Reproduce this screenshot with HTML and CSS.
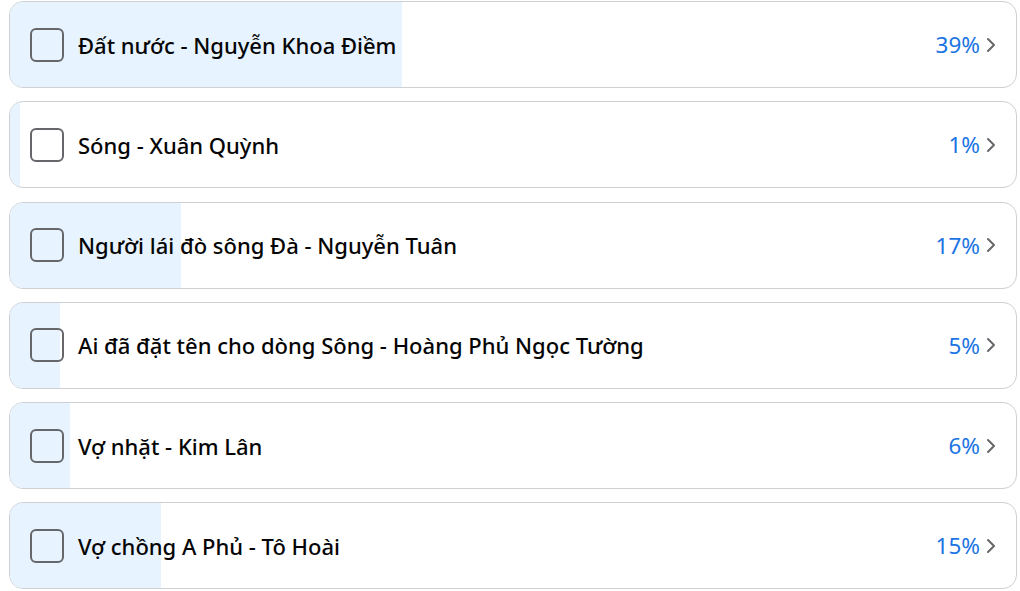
FILE: index.html
```html
<!DOCTYPE html>
<html lang="vi">
<head>
<meta charset="utf-8">
<link rel="stylesheet" href="styles.css">
</head>
<body>
<div class="poll">
  <div class="option">
    <div class="fill" style="width:39%"></div>
    <div class="box"></div>
    <div class="label">Đất nước - Nguyễn Khoa Điềm</div>
    <div class="pct">39%</div>
    <svg class="chev" viewBox="0 0 10 16"><path d="M2 2 L8 8 L2 14" /></svg>
  </div>
  <div class="option">
    <div class="fill" style="width:1%"></div>
    <div class="box"></div>
    <div class="label">Sóng - Xuân Quỳnh</div>
    <div class="pct">1%</div>
    <svg class="chev" viewBox="0 0 10 16"><path d="M2 2 L8 8 L2 14" /></svg>
  </div>
  <div class="option">
    <div class="fill" style="width:17%"></div>
    <div class="box"></div>
    <div class="label">Người lái đò sông Đà - Nguyễn Tuân</div>
    <div class="pct">17%</div>
    <svg class="chev" viewBox="0 0 10 16"><path d="M2 2 L8 8 L2 14" /></svg>
  </div>
  <div class="option">
    <div class="fill" style="width:5%"></div>
    <div class="box"></div>
    <div class="label">Ai đã đặt tên cho dòng Sông - Hoàng Phủ Ngọc Tường</div>
    <div class="pct">5%</div>
    <svg class="chev" viewBox="0 0 10 16"><path d="M2 2 L8 8 L2 14" /></svg>
  </div>
  <div class="option">
    <div class="fill" style="width:6%"></div>
    <div class="box"></div>
    <div class="label">Vợ nhặt - Kim Lân</div>
    <div class="pct">6%</div>
    <svg class="chev" viewBox="0 0 10 16"><path d="M2 2 L8 8 L2 14" /></svg>
  </div>
  <div class="option">
    <div class="fill" style="width:15%"></div>
    <div class="box"></div>
    <div class="label">Vợ chồng A Phủ - Tô Hoài</div>
    <div class="pct">15%</div>
    <svg class="chev" viewBox="0 0 10 16"><path d="M2 2 L8 8 L2 14" /></svg>
  </div>
</div>
</body>
</html>
```

FILE: styles.css
```css
html, body {
  margin: 0;
  padding: 0;
  background: #ffffff;
}
body {
  font-family: "Noto Sans", "Open Sans", sans-serif;
  color: #050505;
}
.poll {
  display: flex;
  flex-direction: column;
  gap: 13.3px;
  padding: 1px 3px 0 9px;
}
.option {
  position: relative;
  display: flex;
  align-items: center;
  height: 85px;
  border: 1px solid #ced0d4;
  border-radius: 14px;
  overflow: hidden;
  padding: 0 20px 0 20px;
  background: #ffffff;
}
.fill {
  position: absolute;
  left: 0;
  top: 0;
  bottom: 0;
  background: #e7f3ff;
}
.box {
  position: relative;
  width: 30px;
  height: 30px;
  border: 2px solid #65676b;
  border-radius: 6px;
  flex: none;
}
.label {
  position: relative;
  margin-left: 14px;
  font-size: 22px;
  font-weight: 500;
  flex: 1;
}
.pct {
  position: relative;
  color: #1b74e4;
  font-size: 22.5px;
}
.chev {
  position: relative;
  width: 10px;
  height: 16px;
  margin-left: 6px;
  fill: none;
  stroke: #65676b;
  stroke-width: 2;
  stroke-linecap: round;
  stroke-linejoin: round;
}
```
